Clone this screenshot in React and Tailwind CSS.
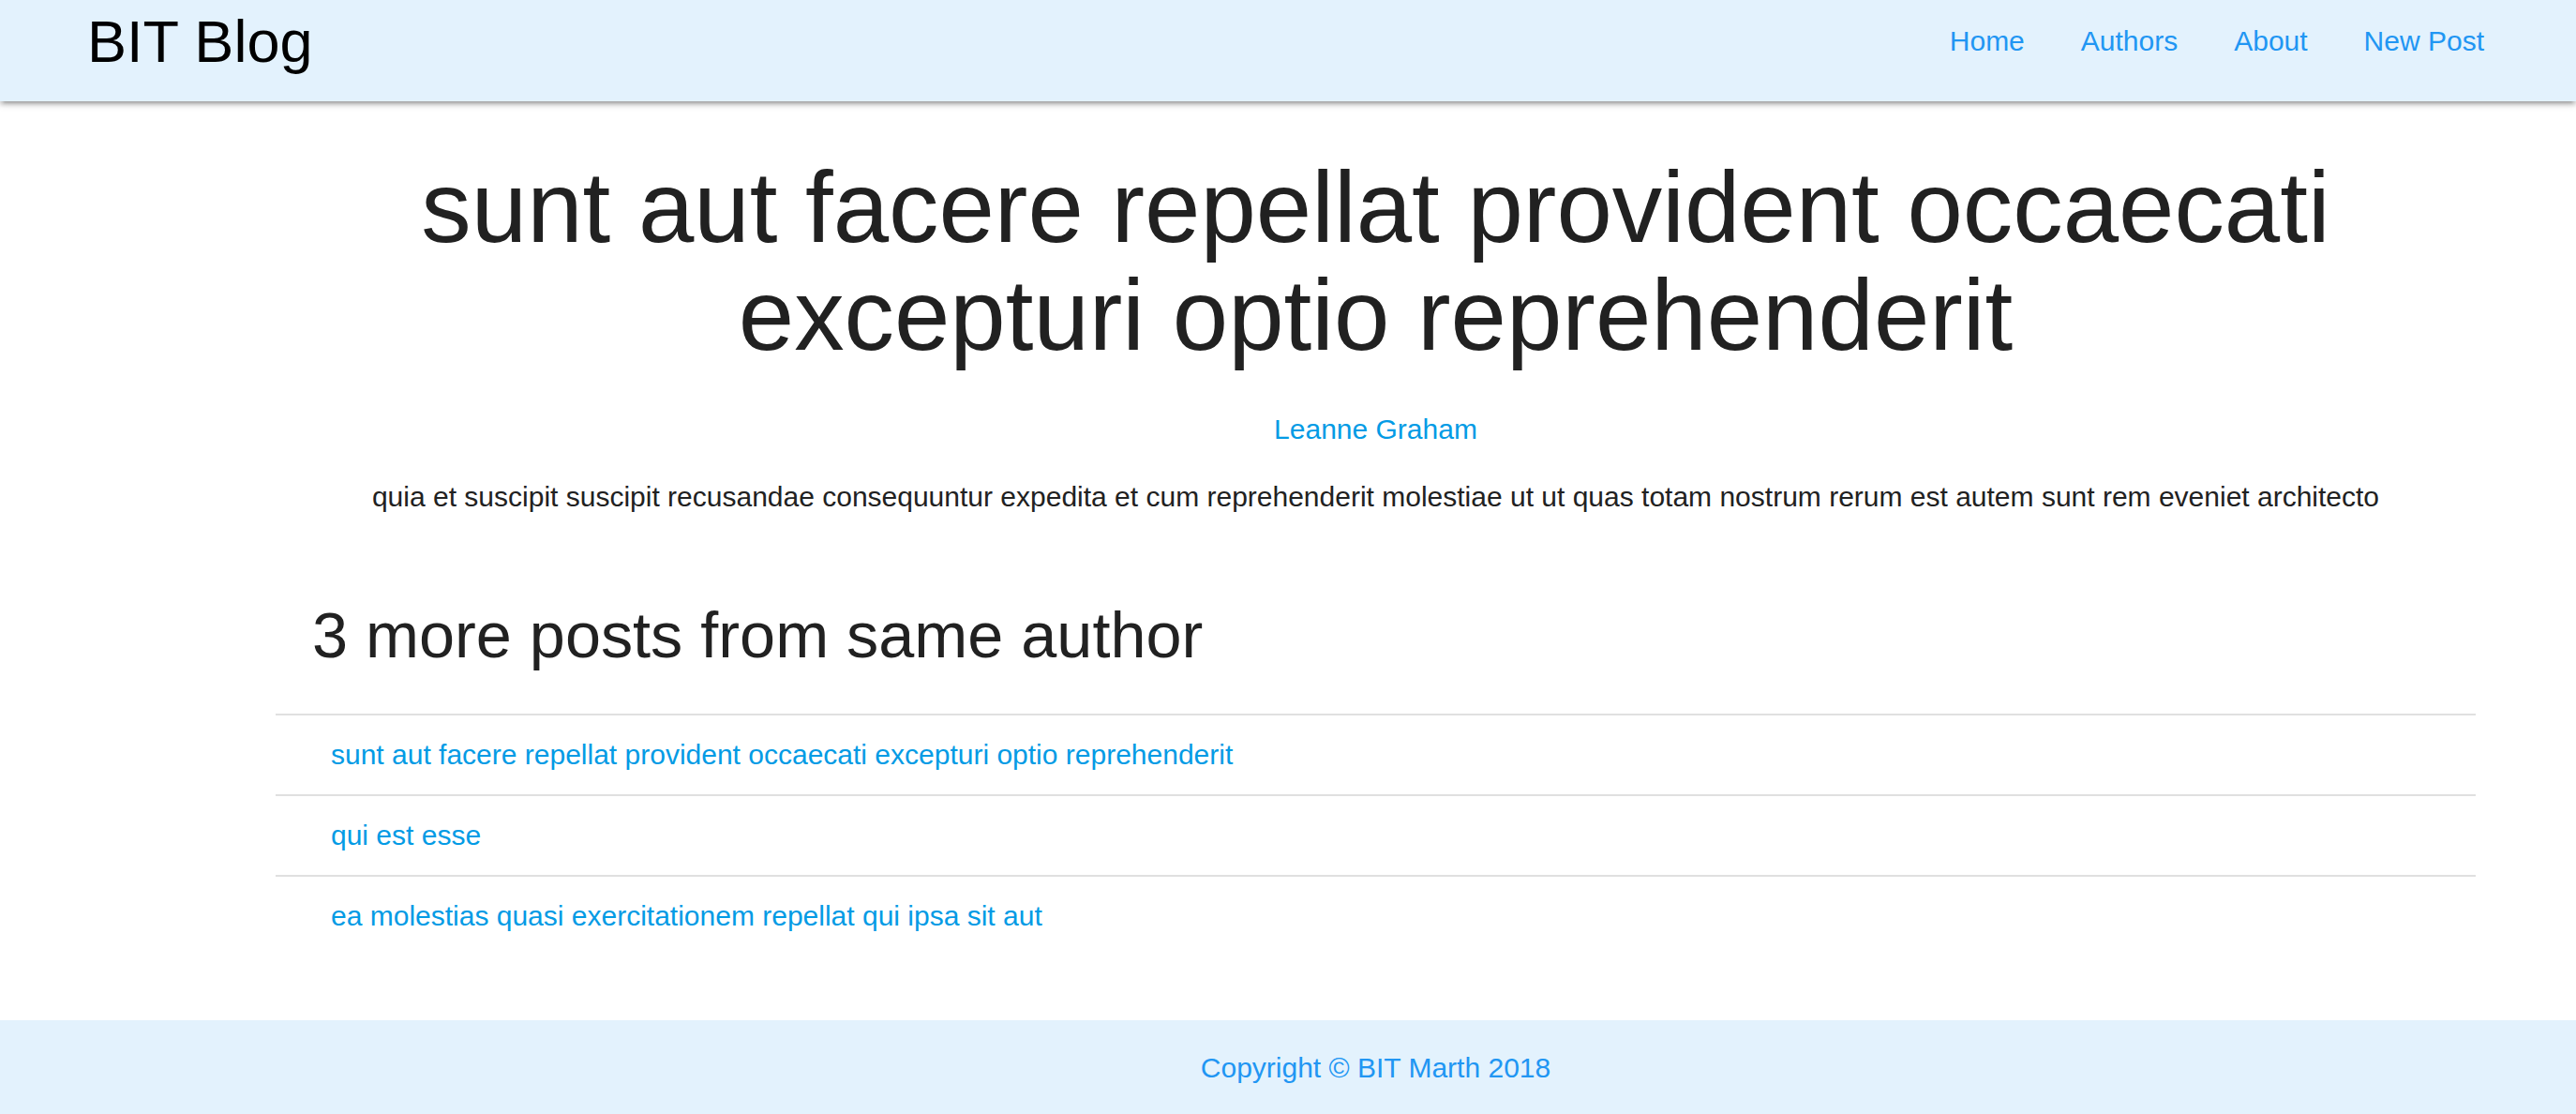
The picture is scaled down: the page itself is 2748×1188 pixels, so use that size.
export default function App() {
  const navLinks = ["Home", "Authors", "About", "New Post"];
  const posts = [
    "sunt aut facere repellat provident occaecati excepturi optio reprehenderit",
    "qui est esse",
    "ea molestias quasi exercitationem repellat qui ipsa sit aut",
  ];
  return (
    <div className="min-h-screen bg-white font-['Liberation_Sans',Arial,sans-serif]">
      <header className="relative z-10 flex h-[108px] items-start justify-between bg-[#e3f2fd] pl-[93px] pr-[68px] shadow-[0_4px_4px_0_rgba(0,0,0,0.14),0_6px_2px_-4px_rgba(0,0,0,0.12),0_2px_9px_0_rgba(0,0,0,0.2)]">
        <a href="#" className="text-[63px] leading-[88px] text-black">
          BIT Blog
        </a>
        <ul className="flex">
          {navLinks.map((l) => (
            <li key={l}>
              <a href="#" className="block px-[30px] text-[30px] leading-[88px] text-[#2196f3]">
                {l}
              </a>
            </li>
          ))}
        </ul>
      </header>

      <main className="pl-[294px] pr-[107px]">
        <h2 className="pt-[56px] text-center text-[106.8px] leading-[115px] text-[#212121]">
          sunt aut facere repellat provident occaecati excepturi optio reprehenderit
        </h2>
        <p className="mt-[41px] text-center text-[30px] leading-[45px]">
          <a href="#" className="text-[#039be5]">
            Leanne Graham
          </a>
        </p>
        <p className="mt-[27px] text-center text-[30px] leading-[45px] text-[#212121]">
          quia et suscipit suscipit recusandae consequuntur expedita et cum reprehenderit molestiae ut ut quas totam nostrum rerum est autem sunt rem eveniet architecto
        </p>
        <h4 className="mt-[88px] pl-[39px] text-[68.4px] leading-[75px] text-[#212121]">
          3 more posts from same author
        </h4>
        <ul className="mt-[46px]">
          {posts.map((p) => (
            <li key={p} className="border-t-2 border-[#e0e0e0] pb-[20px] pl-[59px] pt-[19px]">
              <a href="#" className="text-[30px] leading-[45px] text-[#039be5]">
                {p}
              </a>
            </li>
          ))}
        </ul>
      </main>

      <footer className="mt-[69px] h-[100px] bg-[#e3f2fd] pl-[294px] pr-[107px] pt-[28px] text-center">
        <p className="text-[30px] leading-[45px] text-[#2196f3]">Copyright © BIT Marth 2018</p>
      </footer>
    </div>
  );
}
